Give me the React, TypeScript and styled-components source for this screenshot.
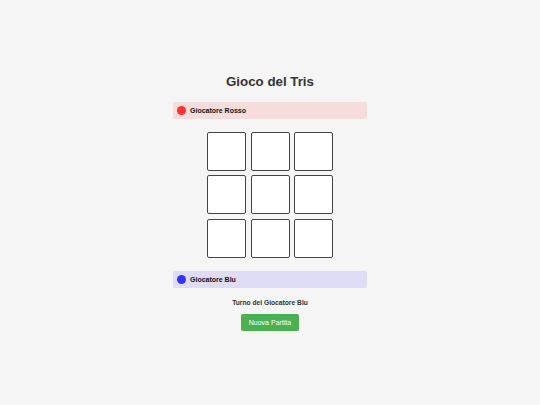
import styled, { createGlobalStyle } from "styled-components"

const GlobalStyle = createGlobalStyle`
  html, body {
    margin: 0;
    padding: 0;
    background-color: #f5f5f5;
    font-family: "Liberation Sans", Arial, sans-serif;
  }
`

const Page = styled.div`
  width: 540px;
  height: 405px;
  display: flex;
  justify-content: center;
  padding-top: 73.5px;
  box-sizing: border-box;
`

const GameColumn = styled.div`
  width: 194px;
  display: flex;
  flex-direction: column;
  align-items: stretch;
`

const Title = styled.h1`
  margin: 0 0 13px 0;
  font-size: 13.3px;
  font-weight: bold;
  color: #333;
  text-align: center;
  line-height: 15.3px;
`

const PlayerBar = styled.div<{ $tint: string }>`
  height: 17px;
  display: flex;
  align-items: center;
  gap: 4px;
  padding: 0 4px;
  border-radius: 2px;
  background-color: ${props => props.$tint};
`

const PlayerDot = styled.span<{ $color: string }>`
  width: 9px;
  height: 9px;
  border-radius: 50%;
  background-color: ${props => props.$color};
  flex-shrink: 0;
`

const PlayerName = styled.span`
  font-size: 7px;
  font-weight: bold;
  color: #111;
`

const Board = styled.div`
  margin: 13px 0;
  display: grid;
  grid-template-columns: repeat(3, 39px);
  grid-auto-rows: 39px;
  gap: 4.7px;
  justify-content: center;
`

const Cell = styled.button`
  box-sizing: border-box;
  width: 39px;
  height: 39px;
  padding: 0;
  border: 1px solid #444;
  border-radius: 2px;
  background-color: #fff;
  cursor: pointer;
`

const Footer = styled.div`
  margin-top: 10.7px;
  display: flex;
  flex-direction: column;
  align-items: center;
  gap: 7.6px;
`

const TurnText = styled.div`
  font-size: 6.7px;
  font-weight: bold;
  color: #333;
  line-height: 7.7px;
`

const NewGameButton = styled.button`
  width: 58px;
  height: 17px;
  padding: 0;
  border: none;
  border-radius: 2px;
  background-color: #4caf50;
  color: #fff;
  font-family: "Liberation Sans", Arial, sans-serif;
  font-size: 7px;
  cursor: pointer;
`

const cells = Array.from({ length: 9 }, (_, i) => i)

export default function App() {
  return (
    <>
      <GlobalStyle />
      <Page>
        <GameColumn>
          <Title>Gioco del Tris</Title>
          <PlayerBar $tint="#f7dcdc">
            <PlayerDot $color="#f33" />
            <PlayerName>Giocatore Rosso</PlayerName>
          </PlayerBar>
          <Board>
            {cells.map(i => (
              <Cell key={i} />
            ))}
          </Board>
          <PlayerBar $tint="#dedcf6">
            <PlayerDot $color="#33f" />
            <PlayerName>Giocatore Blu</PlayerName>
          </PlayerBar>
          <Footer>
            <TurnText>Turno del Giocatore Blu</TurnText>
            <NewGameButton>Nuova Partita</NewGameButton>
          </Footer>
        </GameColumn>
      </Page>
    </>
  )
}
